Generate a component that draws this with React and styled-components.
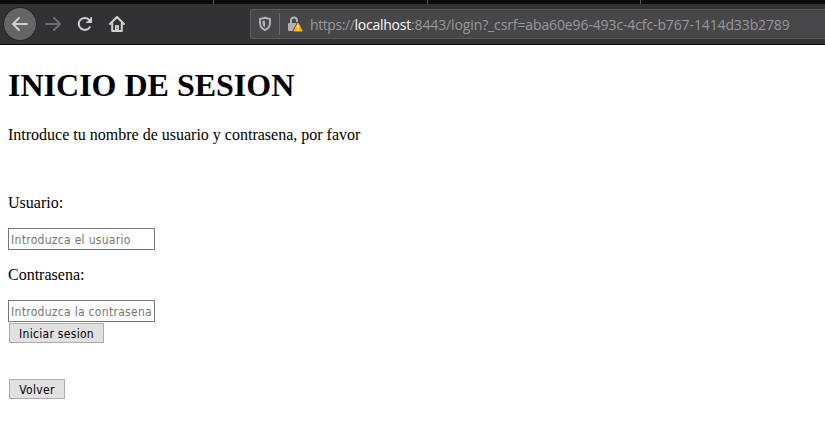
import React from "react";
import styled, { createGlobalStyle } from "styled-components";

const GlobalStyle = createGlobalStyle`
  * { box-sizing: border-box; }
  body { margin: 0; background: #fff; color: #000; overflow: hidden; }
`;

const Window = styled.div`
  height: 447px;
  display: flex;
  flex-direction: column;
  overflow: hidden;
`;

const TabStrip = styled.div`
  height: 4px;
  flex: none;
  display: grid;
  grid-template-columns: 214px 214px 213px 1fr;
  background: #0c0c0d;
`;

const TabEdge = styled.div`
  border-right: 1px solid #555558;
`;

const Toolbar = styled.header`
  height: 41px;
  flex: none;
  display: flex;
  align-items: center;
  background: #323234;
  border-bottom: 1px solid #0c0c0d;
  padding-left: 4px;
`;

const NavButton = styled.div`
  width: 32px;
  height: 32px;
  margin-right: ${(p) => (p.$raised ? 1 : 0)}px;
  display: flex;
  align-items: center;
  justify-content: center;
  border-radius: 50%;
  color: ${(p) => (p.$disabled ? "#6d6d6f" : "#d0d0d1")};
  background: ${(p) => (p.$raised ? "#656566" : "transparent")};
  box-shadow: ${(p) => (p.$raised ? "0 0 0 1px #272729" : "none")};
`;

const AddressBar = styled.div`
  height: 30px;
  flex: 1;
  margin-left: 117px;
  display: flex;
  align-items: center;
  background: #474749;
  border: 1px solid #5b5b5d;
  border-right: 0;
  border-radius: 2px 0 0 2px;
  padding-left: 6px;
  color: #b1b1b3;
`;

const Divider = styled.div`
  width: 1px;
  height: 22px;
  margin: 0 7px 0 6px;
  background: #6b6b6d;
`;

const Url = styled.div`
  margin: 2px 0 0 6px;
  font: 14px/20px "Open Sans", "Noto Sans", sans-serif;
  letter-spacing: -0.12px;
  white-space: nowrap;
  color: #98989a;
`;

const Scheme = styled.span`
  letter-spacing: -0.4px;
`;

const Host = styled.span`
  color: #f9f9fa;
  letter-spacing: -0.25px;
`;

const Page = styled.main`
  padding: 22px 8px 0;
  display: flex;
  flex-direction: column;
  align-items: flex-start;
  font: 16px/18px "Liberation Serif", "Times New Roman", serif;
`;

const Title = styled.h1`
  margin: 0 0 22px;
  font-size: 32px;
  line-height: 37px;
  font-weight: 700;
`;

const Intro = styled.p`
  margin: 0 0 50px;
`;

const Label = styled.label`
  margin-bottom: 16px;
`;

const Field = styled.input`
  width: 147px;
  height: 22px;
  margin: 0 0 ${(p) => p.$gap}px;
  padding: 1px 2px 0;
  border: 1px solid #767676;
  border-radius: 0;
  background: #fff;
  outline: 0;
  font: 12px "DejaVu Sans Condensed", "DejaVu Sans", sans-serif;
  font-stretch: condensed;
  letter-spacing: 0.3px;

  &::placeholder {
    color: #757575;
    opacity: 1;
  }
`;

const Button = styled.button`
  width: ${(p) => p.$width}px;
  height: 20px;
  margin: 1px 1px 35px;
  padding: 1px 0 0;
  border: 1px solid #adadad;
  border-radius: 0;
  background: #e1e1e1;
  color: #000;
  font: 12px/16px "DejaVu Sans Condensed", "DejaVu Sans", sans-serif;
  font-stretch: condensed;
  letter-spacing: 0.3px;
  white-space: nowrap;
`;

const Icon = ({ children }) => (
  <svg width="16" height="16" viewBox="0 0 16 16" fill="none" stroke="currentColor"
    strokeWidth="2" strokeLinecap="round" strokeLinejoin="round">
    {children}
  </svg>
);

const ArrowLeft = () => <Icon><path d="M15 8H1.5M7 2L1 8l6 6" /></Icon>;
const ArrowRight = () => <Icon><path d="M1 8h13.5M9 2l6 6-6 6" /></Icon>;
const Reload = () => (
  <Icon>
    <path d="M12.8 11.2A6 6 0 1 1 12 3.6l1.2 1.3" />
    <path d="M15 1v6H9z" fill="currentColor" stroke="none" />
    <path d="M14.2 1.7v4.5H10" strokeWidth="1.6" />
  </Icon>
);
const Home = () => (
  <Icon>
    <path d="M1 8l7-7 7 7M3.2 7v8h9.6V7" />
    <path d="M6 15V9.2h4V15z" fill="currentColor" stroke="none" />
    <path d="M8 12v.2" stroke="#323234" strokeWidth="1.2" />
  </Icon>
);
const Shield = () => (
  <Icon>
    <path d="M8 1.8l5 1.1v3.8c0 3.5-2.1 6-5 7.4-2.9-1.4-5-3.9-5-7.4V2.9z" />
    <path d="M8 4.5v7c-1.7-1.2-2.6-2.8-2.6-4.8V5z" fill="currentColor" stroke="none" />
  </Icon>
);
const LockWarning = () => (
  <svg width="17" height="16" viewBox="0 0 17 16">
    <path d="M4 8V4.5a3 3 0 0 1 6 0V6" fill="none" stroke="#b1b1b3" strokeWidth="2" />
    <rect x="1" y="7" width="10" height="8" rx="1" fill="#b1b1b3" />
    <path d="M11 6.3l5 9H6z" fill="#ffbf00" stroke="#474749" strokeWidth="1.6" strokeLinejoin="round" />
    <path d="M11 7l4.2 8H6.8z" fill="#ffb000" stroke="#ffb000" strokeWidth="1" strokeLinejoin="round" />
    <path d="M11 8.8v3M11 13.2v1.2" stroke="#fff" strokeWidth="1.3" />
  </svg>
);

export default function App() {
  return (
    <Window>
      <GlobalStyle />
      <TabStrip><TabEdge /><TabEdge /><TabEdge /></TabStrip>
      <Toolbar>
        <NavButton $raised><ArrowLeft /></NavButton>
        <NavButton $disabled><ArrowRight /></NavButton>
        <NavButton><Reload /></NavButton>
        <NavButton><Home /></NavButton>
        <AddressBar>
          <Shield />
          <Divider />
          <LockWarning />
          <Url>
            <Scheme>https://</Scheme><Host>localhost</Host>:8443/login?_csrf=aba60e96-493c-4cfc-b767-1414d33b2789
          </Url>
        </AddressBar>
      </Toolbar>
      <Page>
        <Title>INICIO DE SESION</Title>
        <Intro>Introduce tu nombre de usuario y contrasena, por favor</Intro>
        <Label htmlFor="user">Usuario:</Label>
        <Field id="user" $gap={16} placeholder="Introduzca el usuario" />
        <Label htmlFor="password">Contrasena:</Label>
        <Field id="password" type="password" $gap={0} placeholder="Introduzca la contrasena" />
        <Button $width={95}>Iniciar sesion</Button>
        <Button $width={56}>Volver</Button>
      </Page>
    </Window>
  );
}
